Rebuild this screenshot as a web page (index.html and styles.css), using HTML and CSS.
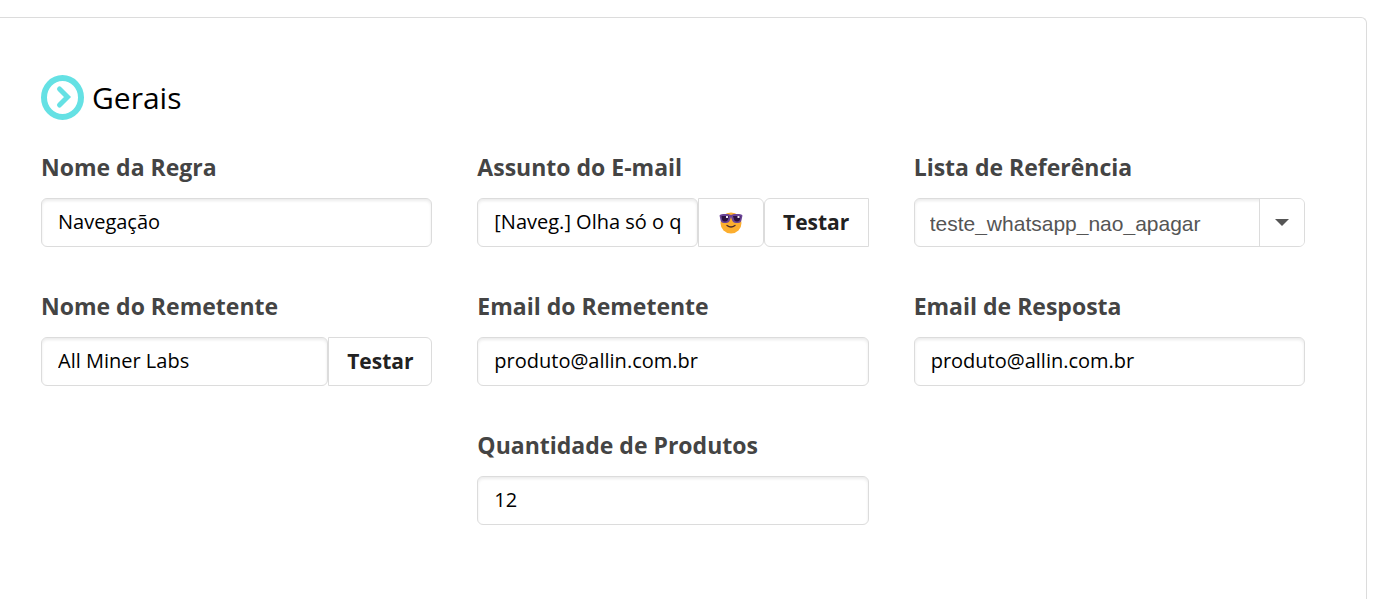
FILE: index.html
```html
<!DOCTYPE html>
<html lang="pt-BR">
<head>
    <meta charset="UTF-8">
    <meta name="viewport" content="width=device-width, initial-scale=1.0">
    <title>Gerais</title>
    <link rel="stylesheet" href="styles.css">
</head>
<body>

    <form class="panel">
        <h2 class="panel-title">
            <svg class="title-icon" width="43" height="45" viewBox="0 0 43 45" aria-hidden="true">
                <ellipse cx="21.5" cy="22.5" rx="18.5" ry="19.5" fill="none" stroke="#65e1e4" stroke-width="6"/>
                <path d="M18.5 14 L26.5 22 L18.5 30" fill="none" stroke="#65e1e4" stroke-width="5" stroke-linecap="round"/>
            </svg>
            <span>Gerais</span>
        </h2>

        <div class="fields">
            <div class="field">
                <label for="nomeRegra">Nome da Regra</label>
                <input type="text" id="nomeRegra" value="Navegação">
            </div>

            <div class="field">
                <label for="assunto">Assunto do E-mail</label>
                <div class="input-group">
                    <input type="text" id="assunto" value="[Naveg.] Olha só o que separamos para você">
                    <button type="button" class="btn btn-emoji" aria-label="Inserir emoji">
                        <svg width="24" height="22" viewBox="0 0 24 22" aria-hidden="true">
                            <circle cx="12" cy="11" r="10.5" fill="#fcae2e"/>
                            <path d="M0.5 3.5 Q1 2 4 2 H9 L12 3 L15 2 H20 Q23 2 23.5 3.5 L22.5 8 Q22 11 19 11 H17 Q14 11 13 8 L12 5 L11 8 Q10 11 7 11 H5 Q2 11 1.5 8 Z" fill="#6b4496"/>
                            <path d="M2.5 4 H10 L9 7.5 Q8.5 9.5 6.5 9.5 H5.5 Q3.5 9.5 3 7.5 Z M14 4 H21.5 L21 7.5 Q20.5 9.5 18.5 9.5 H17.5 Q15.5 9.5 15 7.5 Z" fill="#2b123f"/>
                            <path d="M7 4 h2 v2 h-2 Z M18.5 4 h2 v2 h-2 Z" fill="#f0e8f5"/>
                            <path d="M8 13.5 Q12 16.5 16 13.5" fill="none" stroke="#4b2a2c" stroke-width="1.3" stroke-linecap="round"/>
                        </svg>
                    </button>
                    <button type="button" class="btn btn-square">Testar</button>
                </div>
            </div>

            <div class="field">
                <label for="lista">Lista de Referência</label>
                <div class="select-box">
                    <select id="lista">
                        <option>teste_whatsapp_nao_apagar</option>
                    </select>
                    <span class="select-arrow"></span>
                </div>
            </div>

            <div class="field">
                <label for="nomeRemetente">Nome do Remetente</label>
                <div class="input-group">
                    <input type="text" id="nomeRemetente" value="All Miner Labs">
                    <button type="button" class="btn">Testar</button>
                </div>
            </div>

            <div class="field">
                <label for="emailRemetente">Email do Remetente</label>
                <input type="text" id="emailRemetente" value="produto@allin.com.br">
            </div>

            <div class="field">
                <label for="emailResposta">Email de Resposta</label>
                <input type="text" id="emailResposta" value="produto@allin.com.br">
            </div>

            <div class="field field-middle">
                <label for="quantidade">Quantidade de Produtos</label>
                <input type="text" id="quantidade" value="12">
            </div>
        </div>
    </form>

</body>
</html>
```
FILE: styles.css
```css
* {
    box-sizing: border-box;
}
body {
    margin: 0;
    padding: 17px 18px 0 0;
    background: #fff;
    color: #000;
    font-family: "Open Sans", sans-serif;
}
.panel {
    padding: 56px 61px 74px 41px;
    border: 1px solid #dcdcdc;
    border-left: none;
    border-bottom: none;
    border-top-right-radius: 6px;
}
.panel-title {
    display: flex;
    align-items: center;
    gap: 8px;
    margin: 0 0 30px;
    font-size: 30px;
    font-weight: 400;
    line-height: 47px;
}
.fields {
    display: grid;
    grid-template-columns: repeat(3, minmax(0, 1fr));
    gap: 43px 45px;
}
.field-middle {
    grid-column: 2;
}
.field label {
    display: block;
    margin-bottom: 15px;
    color: #444;
    font-size: 23px;
    font-weight: 700;
    line-height: 32px;
}
.field input {
    display: block;
    width: 100%;
    height: 49px;
    padding: 0 16px 2px;
    border: 1px solid #dcdcdc;
    border-radius: 6px;
    background: #fff;
    box-shadow: inset 0 2px 3px rgba(0, 0, 0, 0.08);
    color: #000;
    font-family: inherit;
    font-size: 20px;
}
.input-group {
    display: flex;
}
.input-group input {
    flex: 1;
    min-width: 0;
}
.btn {
    width: 104px;
    height: 49px;
    padding: 0 0 2px;
    border: 1px solid #dcdcdc;
    border-radius: 0 6px 6px 0;
    background: #fff;
    color: #222;
    font-family: inherit;
    font-size: 21px;
    font-weight: 700;
    cursor: pointer;
}
.btn-emoji {
    display: flex;
    align-items: center;
    justify-content: center;
    width: 66px;
    padding: 0;
}
.btn-square {
    width: 105px;
    border-radius: 6px 0 0 6px;
}
.select-box {
    position: relative;
}
.select-box select {
    display: block;
    width: 100%;
    height: 49px;
    padding: 1px 60px 0 15px;
    border: 1px solid #dcdcdc;
    border-radius: 6px;
    background: #fff;
    box-shadow: inset 0 2px 3px rgba(0, 0, 0, 0.08);
    color: #555;
    font-family: "Liberation Sans", Arial, sans-serif;
    font-size: 21px;
    appearance: none;
}
.select-arrow {
    position: absolute;
    top: 1px;
    right: 1px;
    bottom: 1px;
    display: flex;
    align-items: center;
    justify-content: center;
    width: 45px;
    border-left: 1px solid #dcdcdc;
    border-radius: 0 5px 5px 0;
    background: #fff;
    pointer-events: none;
}
.select-arrow::before {
    content: "";
    border: 7px solid transparent;
    border-top-color: #555;
    border-bottom: none;
}
```
